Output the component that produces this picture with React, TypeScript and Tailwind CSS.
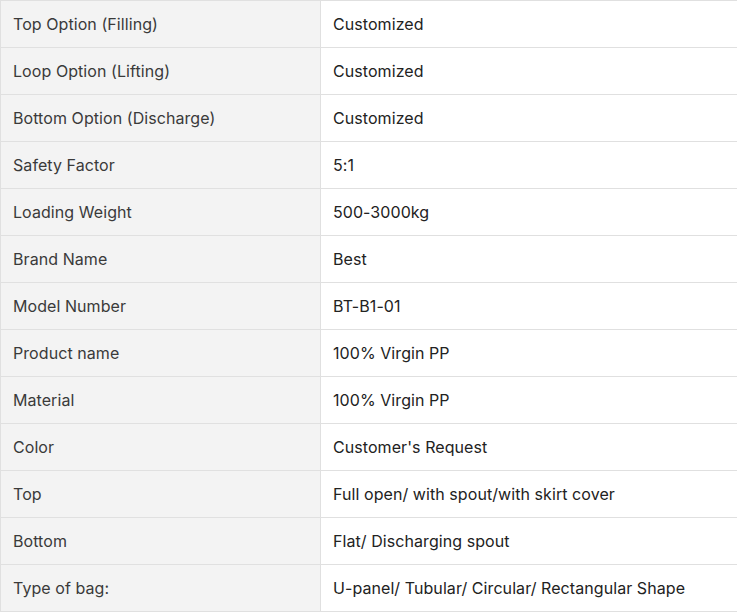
import React from 'react';

const rows: [string, string][] = [
  ['Top Option (Filling)', 'Customized'],
  ['Loop Option (Lifting)', 'Customized'],
  ['Bottom Option (Discharge)', 'Customized'],
  ['Safety Factor', '5:1'],
  ['Loading Weight', '500-3000kg'],
  ['Brand Name', 'Best'],
  ['Model Number', 'BT-B1-01'],
  ['Product name', '100% Virgin PP'],
  ['Material', '100% Virgin PP'],
  ['Color', "Customer's Request"],
  ['Top', 'Full open/ with spout/with skirt cover'],
  ['Bottom', 'Flat/ Discharging spout'],
  ['Type of bag:', 'U-panel/ Tubular/ Circular/ Rectangular Shape'],
];

export default function App() {
  return (
    <div className="w-[737px] overflow-hidden bg-white" style={{ fontFamily: 'Inter, sans-serif' }}>
      <table className="w-[740px] border-collapse text-[16px] tracking-[0.07px]">
        <tbody>
          {rows.map(([k, v]) => (
            <tr key={k} className="h-[47px]">
              <td className="w-[320px] border border-[#e0e0e0] bg-[#f3f3f3] px-3 text-[#3a3a3a]">{k}</td>
              <td className="border border-[#e0e0e0] bg-white px-3 text-[#222222]">{v}</td>
            </tr>
          ))}
        </tbody>
      </table>
    </div>
  );
}
